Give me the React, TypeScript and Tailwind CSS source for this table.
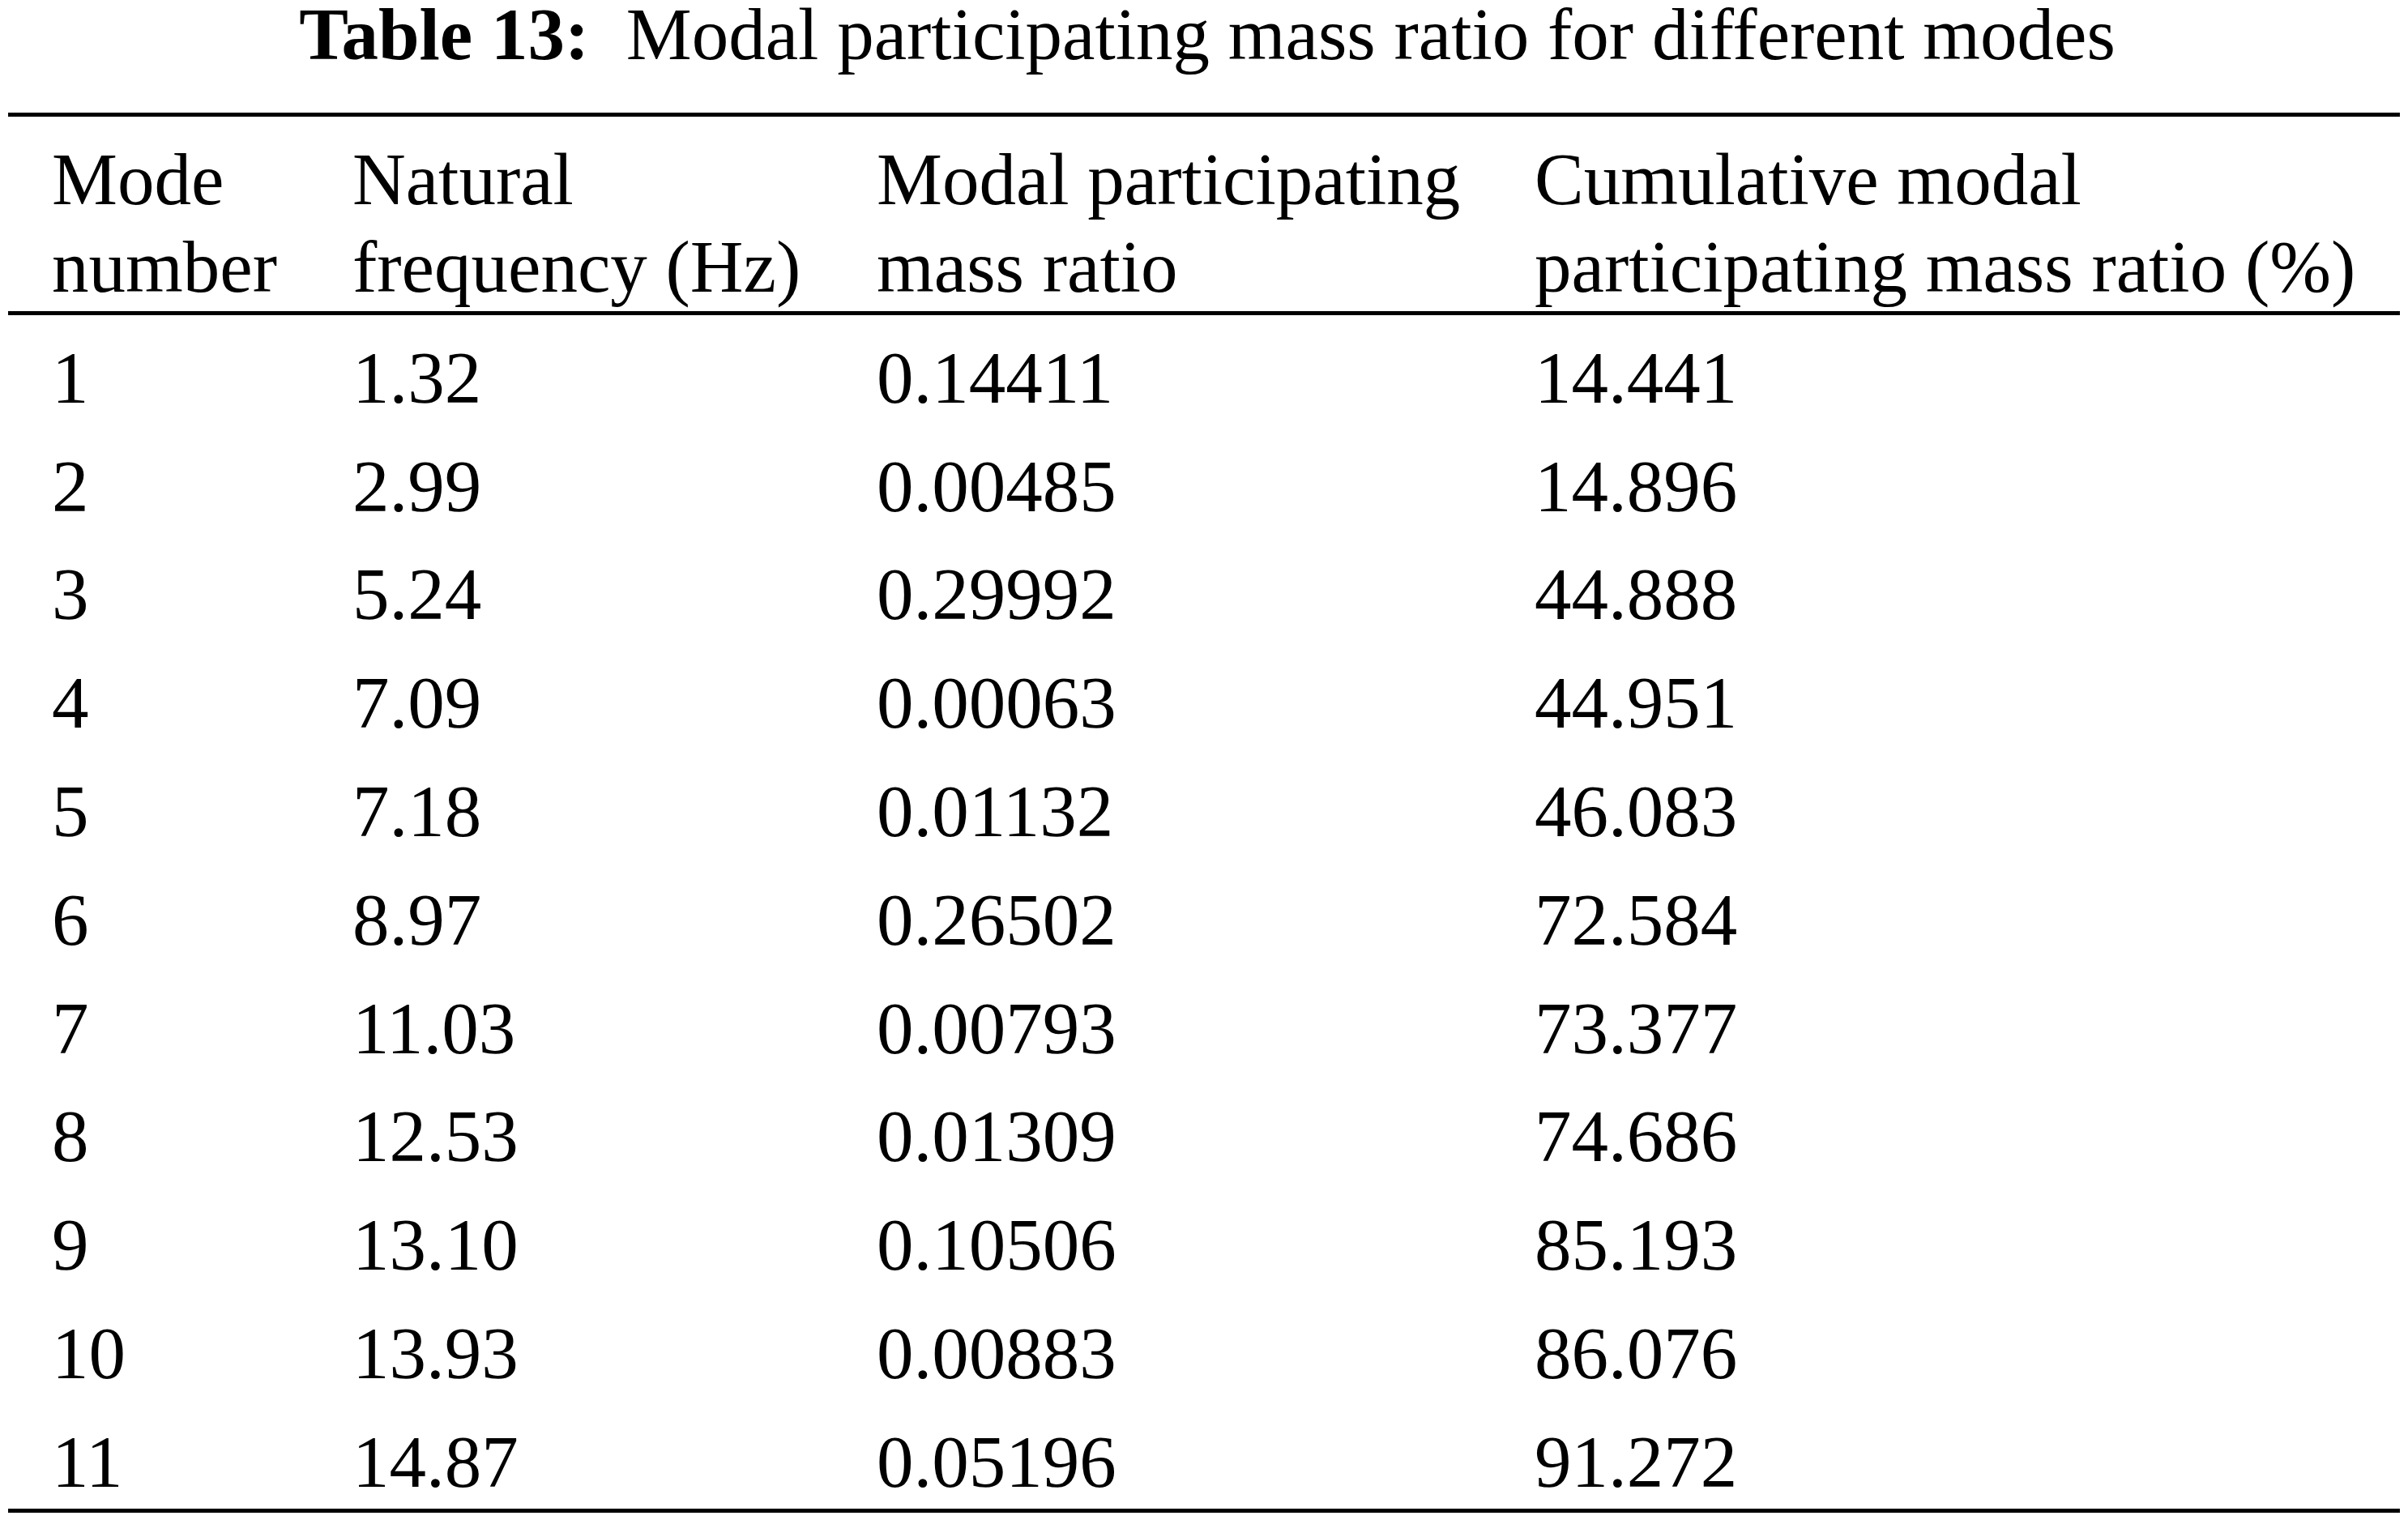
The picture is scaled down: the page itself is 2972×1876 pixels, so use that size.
const rows: [string, string, string, string][] = [
  ['1', '1.32', '0.14411', '14.441'],
  ['2', '2.99', '0.00485', '14.896'],
  ['3', '5.24', '0.29992', '44.888'],
  ['4', '7.09', '0.00063', '44.951'],
  ['5', '7.18', '0.01132', '46.083'],
  ['6', '8.97', '0.26502', '72.584'],
  ['7', '11.03', '0.00793', '73.377'],
  ['8', '12.53', '0.01309', '74.686'],
  ['9', '13.10', '0.10506', '85.193'],
  ['10', '13.93', '0.00883', '86.076'],
  ['11', '14.87', '0.05196', '91.272'],
];

const cols = 'grid grid-cols-[371px_647px_812px_1fr] pl-[54px]';

export default function App() {
  return (
    <div className="min-h-[1876px] w-[2972px] bg-white text-black font-['Liberation_Serif','Times_New_Roman',serif] text-[91px]">
      {/* Caption */}
      <div className="text-center leading-[86px] pl-[8px] whitespace-pre">
        <span className="font-bold">Table 13:</span>
        {'  Modal participating mass ratio for different modes'}
      </div>

      {/* Table */}
      <div className="ml-[10px] mt-[53px] w-[2952px] border-t-[5px] border-b-[5px] border-black">
        <div className={`${cols} pt-[24px] leading-[108px] border-b-[5px] border-black`}>
          <div>
            <div>Mode</div>
            <div>number</div>
          </div>
          <div>
            <div>Natural</div>
            <div>frequency (Hz)</div>
          </div>
          <div>
            <div>Modal participating</div>
            <div>mass ratio</div>
          </div>
          <div>
            <div>Cumulative modal</div>
            <div>participating mass ratio (%)</div>
          </div>
        </div>

        <div className="pb-[1px]">
          {rows.map((r) => (
            <div key={r[0]} className={`${cols} pt-[27.8px] pb-[6px] leading-[100px]`}>
              {r.map((cell, i) => (
                <div key={i}>{cell}</div>
              ))}
            </div>
          ))}
        </div>
      </div>
    </div>
  );
}
